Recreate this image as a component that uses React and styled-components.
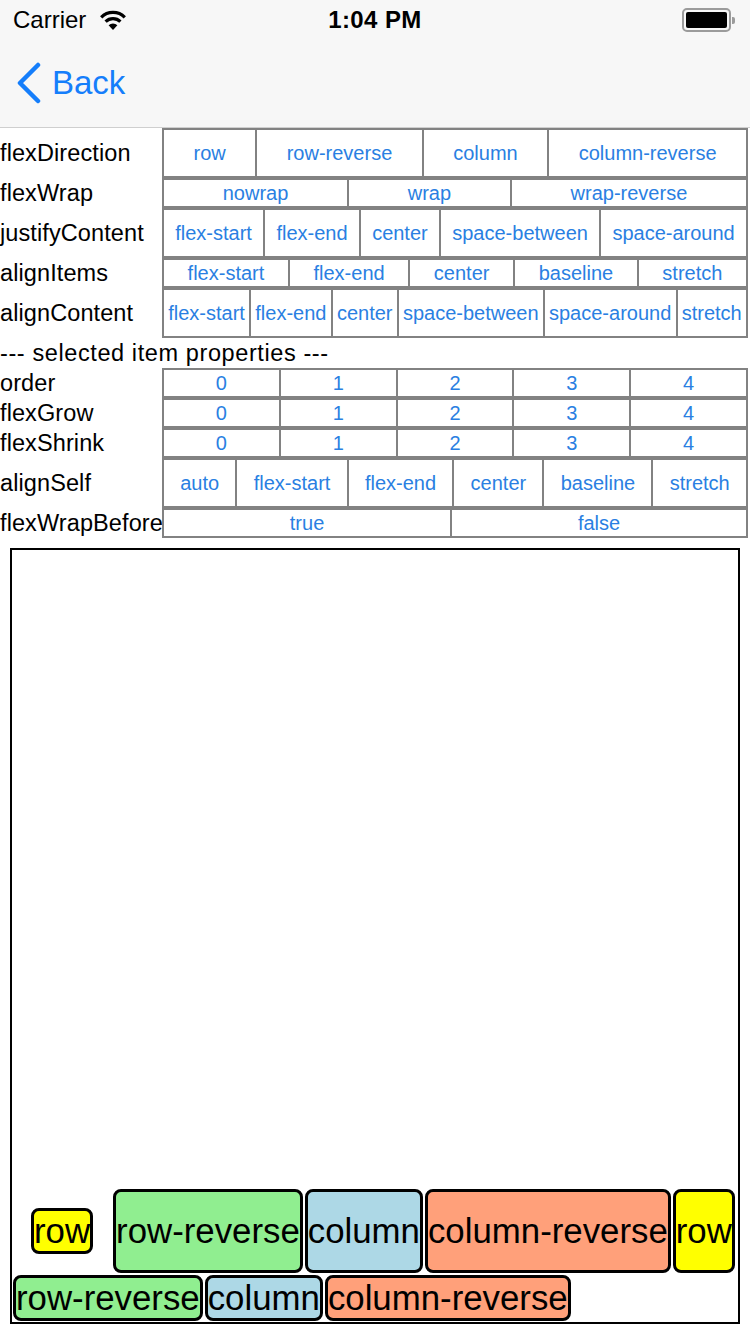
import React, { useState } from 'react';
import styled, { createGlobalStyle } from 'styled-components';

const GlobalStyle = createGlobalStyle`
  html, body {
    margin: 0;
    padding: 0;
    background: #fff;
  }
  body {
    font-family: 'Liberation Sans', Arial, sans-serif;
  }
`;

const containerProps = [
  { label: 'flexDirection', tall: true, options: ['row', 'row-reverse', 'column', 'column-reverse'] },
  { label: 'flexWrap', options: ['nowrap', 'wrap', 'wrap-reverse'] },
  { label: 'justifyContent', tall: true, options: ['flex-start', 'flex-end', 'center', 'space-between', 'space-around'] },
  { label: 'alignItems', options: ['flex-start', 'flex-end', 'center', 'baseline', 'stretch'] },
  { label: 'alignContent', tall: true, options: ['flex-start', 'flex-end', 'center', 'space-between', 'space-around', 'stretch'] }
];

const itemProps = [
  { label: 'order', options: ['0', '1', '2', '3', '4'] },
  { label: 'flexGrow', options: ['0', '1', '2', '3', '4'] },
  { label: 'flexShrink', options: ['0', '1', '2', '3', '4'] },
  { label: 'alignSelf', tall: true, options: ['auto', 'flex-start', 'flex-end', 'center', 'baseline', 'stretch'] },
  { label: 'flexWrapBefore', options: ['true', 'false'] }
];

const palette = ['#ffff00', '#90ee90', '#add8e6', '#ffa07a'];
const names = ['row', 'row-reverse', 'column', 'column-reverse'];
const boxes = Array.from({ length: 8 }, (_, i) => ({
  name: names[i % 4],
  color: palette[i % 4]
}));

const WifiIcon = () => (
  <svg width="30" height="22" viewBox="0 0 30 22">
    <path d="M15 21 L10.6 16.2 A6.5 6.5 0 0 1 19.4 16.2 Z" fill="#000" />
    <path d="M7.6 12.6 A10.6 10.6 0 0 1 22.4 12.6" fill="none" stroke="#000" strokeWidth="3.2" />
    <path d="M3.2 8.4 A16.5 16.5 0 0 1 26.8 8.4" fill="none" stroke="#000" strokeWidth="3.2" />
  </svg>
);

const ChevronLeft = () => (
  <svg width="26" height="42" viewBox="0 0 26 42">
    <path d="M22 3 L4 21 L22 39" fill="none" stroke="#157efb" strokeWidth="4.5" strokeLinecap="round" strokeLinejoin="round" />
  </svg>
);

const App = () => {
  const [selected] = useState(0);

  const renderRow = (row) => (
    <PropRow key={row.label} $tall={row.tall}>
      <Label>{row.label}</Label>
      <ButtonGroup>
        {row.options.map((opt) => (
          <OptionButton key={opt}>{opt}</OptionButton>
        ))}
      </ButtonGroup>
    </PropRow>
  );

  return (
    <Page>
      <GlobalStyle />
      <StatusBar>
        <StatusLeft>
          <span>Carrier</span>
          <WifiIcon />
        </StatusLeft>
        <Time>1:04 PM</Time>
        <Battery>
          <BatteryBody>
            <BatteryFill />
          </BatteryBody>
          <BatteryNub />
        </Battery>
      </StatusBar>
      <NavBar>
        <BackButton>
          <ChevronLeft />
          <span>Back</span>
        </BackButton>
      </NavBar>

      {containerProps.map(renderRow)}
      <SectionTitle>--- selected item properties ---</SectionTitle>
      {itemProps.map(renderRow)}

      <FlexArea>
        {boxes.map((box, i) => (
          <Box key={i} $color={box.color} $selected={i === selected}>
            {box.name}
          </Box>
        ))}
      </FlexArea>
    </Page>
  );
};

const Page = styled.div`
  display: flex;
  flex-direction: column;
  height: 100vh;
  overflow: hidden;
`;

const StatusBar = styled.div`
  height: 40px;
  background: #f7f7f7;
  display: flex;
  align-items: center;
  justify-content: space-between;
  padding: 0 13px 0 13px;
  font-size: 24px;
  color: #000;
  position: relative;
`;

const StatusLeft = styled.div`
  display: flex;
  align-items: center;
  gap: 12px;
`;

const Time = styled.div`
  position: absolute;
  left: 0;
  right: 0;
  text-align: center;
  font-weight: bold;
  letter-spacing: 0.4px;
  pointer-events: none;
`;

const Battery = styled.div`
  display: flex;
  align-items: center;
  margin-right: 2px;
`;

const BatteryBody = styled.div`
  width: 41px;
  height: 16px;
  border: 2px solid #9b9b9b;
  border-radius: 5px;
  padding: 2px;
`;

const BatteryFill = styled.div`
  width: 100%;
  height: 100%;
  background: #000;
  border-radius: 2px;
`;

const BatteryNub = styled.div`
  width: 3px;
  height: 7px;
  background: #9b9b9b;
  border-radius: 0 2px 2px 0;
  margin-left: 1px;
`;

const NavBar = styled.div`
  height: 87px;
  background: #f7f7f7;
  border-bottom: 1px solid #cfcfcf;
  display: flex;
  align-items: center;
  padding-left: 16px;
`;

const BackButton = styled.div`
  display: flex;
  align-items: center;
  gap: 10px;
  color: #157efb;
  font-size: 33px;
  margin-top: -2px;
`;

const PropRow = styled.div`
  display: flex;
  align-items: stretch;
  height: ${({ $tall }) => ($tall ? '50px' : '30px')};
`;

const Label = styled.div`
  width: 162px;
  flex-shrink: 0;
  display: flex;
  align-items: center;
  font-size: 23.5px;
  letter-spacing: 0.1px;
  color: #000;
  white-space: nowrap;
`;

const ButtonGroup = styled.div`
  flex: 1;
  display: flex;
  border: 1px solid #828282;
  margin-right: 2px;
`;

const OptionButton = styled.div`
  flex: 1 1 auto;
  display: flex;
  align-items: center;
  justify-content: center;
  border: 1px solid #828282;
  padding: 0 3px;
  font-size: 20px;
  color: #2a7fe2;
  white-space: nowrap;
  cursor: pointer;
`;

const SectionTitle = styled.div`
  height: 30px;
  display: flex;
  align-items: center;
  font-size: 23.5px;
  letter-spacing: 0.6px;
  color: #000;
`;

const FlexArea = styled.div`
  flex: 1;
  margin: 10px;
  border: 2px solid #000;
  display: flex;
  flex-wrap: wrap;
  align-content: flex-end;
  align-items: stretch;
`;

const Box = styled.div`
  display: flex;
  align-items: center;
  background: ${({ $color }) => $color};
  border: 3px solid #000;
  border-radius: 8px;
  margin: ${({ $selected }) => ($selected ? '20px 19px' : '1px')};
  align-self: ${({ $selected }) => ($selected ? 'center' : 'auto')};
  font-size: 34.8px;
  line-height: 40px;
  color: #000;
  white-space: nowrap;
`;

export default App;
